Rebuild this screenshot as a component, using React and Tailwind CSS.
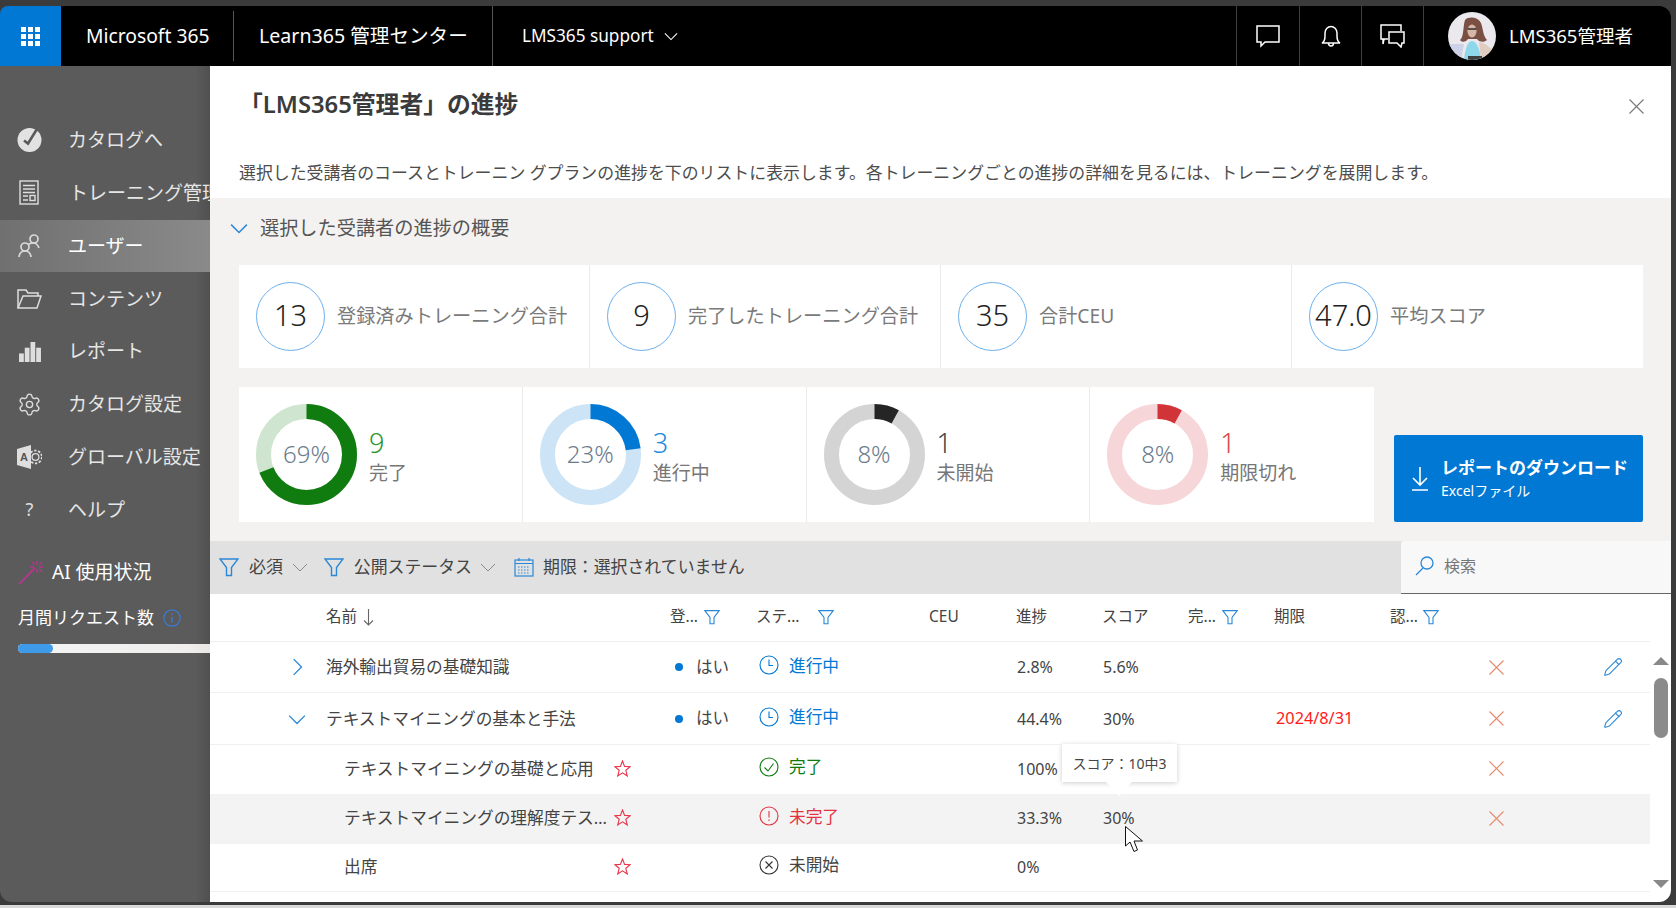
import { Settings, Pencil } from "lucide-react";

const tableCols =
    "grid grid-cols-[116px_344px_87px_173px_86px_86px_86px_86px_116px_99px_114px_47px] items-center";

const navItems = [
    { label: "カタログへ", icon: <CatalogIcon /> },
    { label: "トレーニング管理", icon: <TrainingIcon />, shift: true },
    { label: "ユーザー", icon: <UsersIcon />, active: true },
    { label: "コンテンツ", icon: <FolderIcon /> },
    { label: "レポート", icon: <BarsIcon /> },
    { label: "カタログ設定", icon: <Settings size={29} strokeWidth={1.3} className="text-[#dedede]" /> },
    { label: "グローバル設定", icon: <GlobalIcon /> },
    { label: "ヘルプ", icon: <span className="block w-[25px] text-center text-[18px] text-[#dedede]">?</span> },
];

const stats = [
    { value: "13", label: "登録済みトレーニング合計" },
    { value: "9", label: "完了したトレーニング合計" },
    { value: "35", label: "合計CEU" },
    { value: "47.0", label: "平均スコア" },
];

const donuts = [
    { pct: 69, count: "9", label: "完了", main: "#107c10", track: "#cfe5cf", text: "text-[#2b962b]", r: 43, w: 15 },
    { pct: 23, count: "3", label: "進行中", main: "#0078d4", track: "#cce4f6", text: "text-[#1f8ae0]", r: 43, w: 15 },
    { pct: 8, count: "1", label: "未開始", main: "#252525", track: "#d4d4d4", text: "text-[#444444]", r: 43, w: 15 },
    { pct: 8, count: "1", label: "期限切れ", main: "#d13438", track: "#f6d6d8", text: "text-[#d9474b]", r: 43, w: 15 },
];

const rows = [
    { name: "海外輸出貿易の基礎知識", open: false, reg: true, status: "progress", prog: "2.8%", score: "5.6%", edit: true, h: "h-[51px]" },
    { name: "テキストマイニングの基本と手法", open: true, reg: true, status: "progress", prog: "44.4%", score: "30%", due: "2024/8/31", edit: true, h: "h-[52px]" },
    { name: "テキストマイニングの基礎と応用", child: true, status: "done", prog: "100%", h: "h-[49px]" },
    { name: "テキストマイニングの理解度テスト", child: true, status: "failed", prog: "33.3%", score: "30%", hover: true, h: "h-[50px]" },
    { name: "出席", child: true, status: "none", prog: "0%", noX: true, h: "h-[48px]" },
];

function CatalogIcon() {
    return (
        <svg width="25" height="26" viewBox="0 0 25 26">
            <circle cx="12.5" cy="13" r="12" fill="#e2e2e2" />
            <path d="M7 13.5 L11 16.5 L20 2" fill="none" stroke="#5a5a5a" strokeWidth="2.6" />
        </svg>
    );
}

function TrainingIcon() {
    return (
        <svg width="25" height="26" viewBox="0 0 25 26" fill="none" stroke="#dedede" strokeWidth="1.4">
            <rect x="3" y="1" width="18" height="23" />
            <path d="M6 5.5 H18 M6 9 H18 M6 12.5 H18 M6 16 H11 M6 20 H11" />
            <rect x="13" y="15.5" width="5" height="5" />
        </svg>
    );
}

function UsersIcon() {
    return (
        <svg width="25" height="26" viewBox="0 0 25 26" fill="none" stroke="#d8d8d8" strokeWidth="1.7">
            <circle cx="17" cy="6" r="4" />
            <circle cx="8" cy="14" r="4" />
            <path d="M11 12 C12 10.5 14 10 16 10 C19 10 21 12 22 15" />
            <path d="M2 24 C2.5 20 5 18 8 18 C11 18 13.5 20 14 24" />
        </svg>
    );
}

function FolderIcon() {
    return (
        <svg width="25" height="22" viewBox="0 0 25 22" fill="none" stroke="#dedede" strokeWidth="1.5">
            <path d="M1 20 V2 H9 L11 5 H21 V8" />
            <path d="M1 20 L6 8 H24 L20 20 Z" />
        </svg>
    );
}

function BarsIcon() {
    return (
        <svg width="24" height="20" viewBox="0 0 25 21" fill="#dedede">
            <rect x="1" y="12" width="5" height="9" />
            <rect x="7" y="6" width="5" height="15" />
            <rect x="13" y="0" width="5" height="21" />
            <rect x="19" y="6" width="5" height="15" />
        </svg>
    );
}

function GlobalIcon() {
    return (
        <svg width="25" height="24" viewBox="0 0 25 24">
            <path d="M0 4 L14 0 V24 L0 20 Z" fill="#dedede" />
            <text x="3" y="16" fontSize="11" fontWeight="700" fill="#555555" fontFamily="Liberation Sans">A</text>
            <circle cx="18.5" cy="12" r="3.4" fill="none" stroke="#dedede" strokeWidth="1.3" />
            <circle cx="18.5" cy="12" r="6.4" fill="none" stroke="#dedede" strokeWidth="1.8" strokeDasharray="2.4 1.6" />
        </svg>
    );
}

function Funnel({ size = 20 }) {
    return (
        <svg width={size} height={size} viewBox="0 0 20 20" fill="none" stroke="#2b88d8" strokeWidth="1.4" className="shrink-0">
            <path d="M1 2 H19 L12.5 10.5 V18.5 H7.5 V10.5 Z" />
        </svg>
    );
}

function Chevron({ dir = "down", size = 16, color = "#2b88d8", sw = 1.3 }) {
    const d = dir === "down" ? "M1 5 L8 12 L15 5" : "M5 1 L12 8 L5 15";
    return (
        <svg width={size} height={size} viewBox="0 0 16 16" fill="none" stroke={color} strokeWidth={sw} className="shrink-0">
            <path d={d} />
        </svg>
    );
}

function StatusIcon({ status }) {
    const color = { progress: "#0078d4", done: "#107c10", failed: "#e3323f", none: "#333333" }[status];
    return (
        <svg width="20" height="20" viewBox="0 0 20 20" fill="none" stroke={color} strokeWidth="1.1" className="shrink-0">
            <circle cx="10" cy="10" r="9" />
            {status === "progress" && <path d="M10 4.5 V10.5 H14" />}
            {status === "done" && <path d="M5.5 10.5 L9 14 L14.5 6.5" />}
            {status === "failed" && <path d="M10 5 V11.5 M10 13.5 V15" />}
            {status === "none" && <path d="M6.5 6.5 L13.5 13.5 M13.5 6.5 L6.5 13.5" />}
        </svg>
    );
}

function Star() {
    return (
        <svg width="17" height="17" viewBox="0 0 17 17" fill="none" stroke="#e8344a" strokeWidth="1.1" className="shrink-0">
            <path d="M8.5 1 L10.6 6.4 L16.2 6.7 L11.8 10.3 L13.3 16 L8.5 12.8 L3.7 16 L5.2 10.3 L0.8 6.7 L6.4 6.4 Z" />
        </svg>
    );
}

function Cross({ size = 15, color = "#e58a6a" }) {
    return (
        <svg width={size} height={size} viewBox="0 0 15 15" fill="none" stroke={color} strokeWidth="1.1">
            <path d="M0.5 0.5 L14.5 14.5 M14.5 0.5 L0.5 14.5" />
        </svg>
    );
}

function Avatar() {
    return (
        <svg width="48" height="48" viewBox="0 0 48 48" className="shrink-0 rounded-full">
            <rect width="48" height="48" fill="#ece9ee" />
            <path d="M0 32 H16 L13 48 H0 Z" fill="#cdd2e8" />
            <path d="M17 8 C21 4 30 5 33 11 C35 16 35 24 39 28 C36 31 31 30 29 27 H20 C18 30 14 31 12 28 C16 25 15 13 17 8 Z" fill="#7a5044" />
            <ellipse cx="24" cy="19" rx="4.6" ry="6.5" fill="#d8b6a6" />
            <path d="M19.5 17 H28.5" stroke="#2a2a2a" strokeWidth="1.3" />
            <path d="M16 48 C17 36 20 29 24 29 C28 29 32 36 33 48 Z" fill="#8fd8ec" />
            <path d="M31 30 C38 31 44 36 47 44 V48 H33 Z" fill="#e0cdbf" />
            <path d="M20 44 H34 V48 H20 Z" fill="#3f3f40" />
        </svg>
    );
}

function Donut({ item }) {
    const c = 2 * Math.PI * item.r;
    return (
        <svg width="101" height="101" viewBox="0 0 101 101" className="absolute inset-0 -rotate-90">
            <circle cx="50.5" cy="50.5" r={item.r} fill="none" stroke={item.track} strokeWidth={item.w} />
            <circle
                cx="50.5"
                cy="50.5"
                r={item.r}
                fill="none"
                stroke={item.main}
                strokeWidth={item.w}
                strokeDasharray={`${(c * item.pct) / 100} ${c}`}
            />
        </svg>
    );
}

function Header() {
    return (
        <header className="flex h-[60px] shrink-0 items-center rounded-t-xl bg-black text-white">
            <div className="flex h-full w-[61px] items-center justify-center rounded-tl-lg bg-[#0078d4]">
                <div className="grid grid-cols-3 gap-[2px]">
                    {Array.from({ length: 9 }).map((_, i) => (
                        <span key={i} className="h-[5px] w-[5px] bg-white" />
                    ))}
                </div>
            </div>
            <div className="flex h-[50px] w-[173px] items-center border-r border-[#555555] pl-[25px] text-[19.3px]">
                Microsoft 365
            </div>
            <div className="flex h-full w-[259px] items-center border-r border-[#555555] pl-[25px] text-[19.6px]">
                Learn365 管理センター
            </div>
            <div className="flex items-center gap-[10px] pl-[29px] text-[17.2px]">
                LMS365 support
                <Chevron size={14} color="#ffffff" sw={1.2} />
            </div>
            <div className="ml-auto flex h-full items-center">
                <div className="flex h-full w-[63px] items-center justify-center border-l border-[#3f3f3f]">
                    <svg width="24" height="24" viewBox="0 0 24 24" fill="none" stroke="#ffffff" strokeWidth="1.5">
                        <path d="M1 2 H23 V18 H9 L5 22 V18 H1 Z" />
                    </svg>
                </div>
                <div className="flex h-full w-[62px] items-center justify-center border-l border-[#3f3f3f]">
                    <svg width="22" height="23" viewBox="0 0 22 23" fill="none" stroke="#ffffff" strokeWidth="1.5">
                        <path d="M2 18 C4 17 5 15 5 11 V8 C5 4 8 1.5 11 1.5 C14 1.5 17 4 17 8 V11 C17 15 18 17 20 18 Z" />
                        <path d="M8.5 18 C8.5 22 13.5 22 13.5 18" />
                    </svg>
                </div>
                <div className="flex h-full w-[62px] items-center justify-center border-l border-[#3f3f3f]">
                    <svg width="25" height="24" viewBox="0 0 25 24" fill="none" stroke="#ffffff" strokeWidth="1.5">
                        <path d="M8 15 H4 L3 20 V15 H1 V1 H21 V7" />
                        <path d="M9 8 H24 V19 H22 L21 23 L17 19 H9 Z" />
                    </svg>
                </div>
                <div className="flex h-full w-[248px] items-center gap-[13px] border-l border-[#3f3f3f] pl-[24px] text-[18.5px]">
                    <Avatar />
                    LMS365管理者
                </div>
            </div>
        </header>
    );
}

function Sidebar() {
    return (
        <aside className="w-[210px] shrink-0 overflow-hidden rounded-bl-xl bg-[linear-gradient(90deg,#5b5b5b_93%,#505050)] pt-[48px] text-[#e6e6e6]">
            <nav>
                {navItems.map((item) => (
                    <div
                        key={item.label}
                        className={`flex h-[52.8px] items-center whitespace-nowrap pl-[17px] text-[19px] ${
                            item.active ? "bg-[linear-gradient(90deg,#707070,#8a8a8a)] text-white" : ""
                        }`}
                    >
                        <span className="flex w-[25px] shrink-0 justify-center">{item.icon}</span>
                        <span className={item.shift ? "ml-[27px]" : "ml-[26px]"}>{item.label}</span>
                    </div>
                ))}
            </nav>
            <div className="mt-[22px] flex items-center gap-[9px] pl-[18px] text-[19px] text-white">
                <svg width="25" height="25" viewBox="0 0 25 25" fill="none" stroke="#b5378d" strokeWidth="1.4" className="shrink-0">
                    <path d="M1 24 L17 8" strokeWidth="1.8" />
                    <path d="M19 1 V5 M19 9 V13 M12 7 H16 M21 7 H25 M14 2 L16.5 4.5 M24 2 L21.5 4.5 M21.5 9.5 L24 12" />
                </svg>
                AI 使用状況
            </div>
            <div className="mt-[18px] flex items-center gap-[9px] pl-[18px] text-[17px] text-white">
                月間リクエスト数
                <svg width="18" height="18" viewBox="0 0 18 18" fill="none" stroke="#3a7bd5" strokeWidth="1.2" className="shrink-0">
                    <circle cx="9" cy="9" r="8.2" />
                    <path d="M9 8 V13.5 M9 4.5 V6" strokeWidth="1.5" />
                </svg>
            </div>
            <div className="ml-[18px] mt-[14px] h-[9px] w-[240px] rounded-full bg-[linear-gradient(90deg,#f4f4f4,#f0efee_70%,#d8d6d4)]">
                <div className="h-full w-[35px] rounded-full bg-[#3d9be9]" />
            </div>
        </aside>
    );
}

function Summary() {
    return (
        <section className="h-[343px] shrink-0 bg-[#f3f2f1] pl-[29px] pr-[28px]">
            <div className="flex h-[67px] items-center gap-[12px] pb-[7px] text-[19.2px] text-[#555555]">
                <span className="-ml-[9px]">
                    <Chevron size={18} sw={1.3} />
                </span>
                選択した受講者の進捗の概要
            </div>
            <div className="flex h-[103px] bg-white">
                {stats.map((s, i) => (
                    <div
                        key={s.label}
                        className={`flex w-[351px] items-center gap-[12px] pl-[17px] ${i < 3 ? "border-r border-[#eaeaea]" : ""}`}
                    >
                        <div className="flex h-[69px] w-[69px] shrink-0 items-center justify-center rounded-full border border-[#6cb0ee] pb-[3px] text-[29px] font-light text-[#222222]">
                            {s.value}
                        </div>
                        <span className="text-[19.2px] text-[#7a7a7a]">{s.label}</span>
                    </div>
                ))}
            </div>
            <div className="mt-[19px] flex h-[135px] items-end justify-between">
                <div className="flex h-full bg-white">
                    {donuts.map((d, i) => (
                        <div
                            key={d.label}
                            className={`flex w-[283.75px] items-center gap-[12px] pl-[17px] ${i < 3 ? "border-r border-[#eaeaea]" : ""}`}
                        >
                            <div className="relative flex h-[101px] w-[101px] shrink-0 items-center justify-center">
                                <Donut item={d} />
                                <span className="pb-[2px] text-[24px] font-light text-[#6b7b8c]">{d.pct}%</span>
                            </div>
                            <div className="flex flex-col pt-[3px]">
                                <span className={`text-[27px] font-light leading-[34px] ${d.text}`}>{d.count}</span>
                                <span className="text-[19px] leading-[27px] text-[#777777]">{d.label}</span>
                            </div>
                        </div>
                    ))}
                </div>
                <div className="flex h-[87px] w-[249px] items-center gap-[12px] rounded-[2px] bg-[#0078d4] pl-[17px] text-white">
                    <svg width="18" height="25" viewBox="0 0 18 25" fill="none" stroke="#ffffff" strokeWidth="1.6" className="shrink-0">
                        <path d="M9 1 V19 M2 12 L9 19 L16 12 M1 24 H17" />
                    </svg>
                    <div className="flex flex-col">
                        <span className="whitespace-nowrap text-[17px] font-bold leading-[24px]">レポートのダウンロード</span>
                        <span className="text-[14px] leading-[22px]">Excelファイル</span>
                    </div>
                </div>
            </div>
        </section>
    );
}

function FilterBar() {
    return (
        <div className="flex h-[53px] shrink-0 items-center bg-[#e1e1e1] text-[16.9px] text-[#444444]">
            <div className="flex flex-1 items-center pb-px pl-[9px]">
                <Funnel />
                <span className="ml-[10px]">必須</span>
                <span className="ml-[9px]"><Chevron size={16} color="#8a8a8a" sw={1} /></span>
                <span className="ml-[16px]"><Funnel /></span>
                <span className="ml-[10px]">公開ステータス</span>
                <span className="ml-[8px]"><Chevron size={16} color="#8a8a8a" sw={1} /></span>
                <svg width="20" height="20" viewBox="0 0 20 20" fill="none" stroke="#2b88d8" strokeWidth="1.2" className="ml-[18px] shrink-0">
                    <rect x="1" y="3" width="18" height="16" />
                    <path d="M1 6.5 H19 M5 1 V4 M15 1 V4" />
                    <path d="M4 10 H16 M4 13 H16 M4 16 H16" strokeDasharray="1.5 1.5" />
                </svg>
                <span className="ml-[9px]">期限：選択されていません</span>
            </div>
            <div className="flex h-full w-[270px] items-center gap-[10px] rounded-tl-[3px] border-b border-[#666666] bg-[#f8f8f8] pb-[2px] pl-[14px] text-[16px] text-[#777777]">
                <svg width="19" height="20" viewBox="0 0 19 20" fill="none" stroke="#2b88d8" strokeWidth="1.3" className="shrink-0">
                    <circle cx="12" cy="7" r="6" />
                    <path d="M8 12 L1 19" />
                </svg>
                検索
            </div>
        </div>
    );
}

function TableHead() {
    return (
        <div className={`${tableCols} h-[48px] shrink-0 border-b border-[#eeeeee] pb-px text-[15.5px] text-[#444444]`}>
            <span />
            <span className="flex items-center gap-[6px]">
                名前
                <svg width="11" height="18" viewBox="0 0 11 18" fill="none" stroke="#666666" strokeWidth="1.1">
                    <path d="M5.5 1 V17 M1 12.5 L5.5 17 L10 12.5" />
                </svg>
            </span>
            <span className="flex items-center gap-[6px]">登... <Funnel size={16} /></span>
            <span className="-ml-px flex items-center gap-[19px]">ステ... <Funnel size={16} /></span>
            <span className="-ml-px">CEU</span>
            <span>進捗</span>
            <span>スコア</span>
            <span className="flex items-center gap-[6px]">完... <Funnel size={16} /></span>
            <span>期限</span>
            <span className="flex items-center gap-[5px]">認... <Funnel size={16} /></span>
            <span />
            <span />
        </div>
    );
}

function Row({ row }) {
    const statusText = {
        progress: ["進行中", "text-[#0078d4]"],
        done: ["完了", "text-[#107c10]"],
        failed: ["未完了", "text-[#e3323f]"],
        none: ["未開始", "text-[#444444]"],
    }[row.status];

    return (
        <div className={`${tableCols} ${row.h} text-[16.7px] text-[#444444] ${row.hover ? "bg-[#f3f3f3]" : ""} ${row.child ? "pb-[2px]" : "border-b border-[#f0f0f0]"} ${row.noX ? "border-b border-[#f0f0f0]" : ""}`}>
            <span className="flex justify-end pr-[20px]">
                {!row.child && <Chevron dir={row.open ? "down" : "right"} size={18} sw={1.2} />}
            </span>
            {row.child ? (
                <span className="flex items-center pl-[18px]">
                    <span className="w-[265px] truncate">{row.name}</span>
                    <span className="ml-[5px]"><Star /></span>
                </span>
            ) : (
                <span>{row.name}</span>
            )}
            <span className="flex items-center gap-[13px] pl-[5px] text-[16.5px]">
                {row.reg && (
                    <>
                        <span className="h-[8px] w-[8px] rounded-full bg-[#0078d4]" />
                        はい
                    </>
                )}
            </span>
            <span className={`flex items-center gap-[10px] pb-[3px] pl-[2px] ${statusText[1]}`}>
                <StatusIcon status={row.status} />
                {statusText[0]}
            </span>
            <span />
            <span className="pl-[1px] text-[16px]">{row.prog}</span>
            <span className="pl-[1px] text-[16px]">{row.score}</span>
            <span />
            <span className="pl-[2px] text-[16.3px] text-[#ff1a1a]">{row.due}</span>
            <span />
            <span>{!row.noX && <Cross />}</span>
            <span>
                {row.edit && <Pencil size={20} strokeWidth={1.3} className="text-[#2b88d8]" />}
            </span>
        </div>
    );
}

function Scrollbar() {
    return (
        <div className="flex w-[21px] shrink-0 flex-col items-center pt-[63px]">
            <div className="h-0 w-0 border-x-[8px] border-b-[8px] border-x-transparent border-b-[#888888]" />
            <div className="mt-[13px] h-[60px] w-[14px] rounded-full bg-[#8b8b8b]" />
            <div className="mt-[142px] h-0 w-0 border-x-[8px] border-t-[8px] border-x-transparent border-t-[#888888]" />
        </div>
    );
}

function Panel() {
    return (
        <main className="flex min-w-0 flex-1 flex-col overflow-hidden rounded-br-xl bg-white">
            <div className="relative h-[132px] shrink-0 pl-[29px]">
                <h1 className="pt-[21px] text-[23.8px] font-semibold leading-[34px] text-[#3b3b3b]">「LMS365管理者」の進捗</h1>
                <p className="mt-[40px] whitespace-nowrap text-[16.9px] leading-[24px] text-[#4d4d4d]">
                    選択した受講者のコースとトレーニン グプランの進捗を下のリストに表示します。各トレーニングごとの進捗の詳細を見るには、トレーニングを展開します。
                </p>
                <span className="absolute right-[27px] top-[33px]">
                    <Cross size={15} color="#777777" />
                </span>
            </div>
            <Summary />
            <FilterBar />
            <div className="flex flex-1">
                <div className="w-[1440px] shrink-0">
                    <TableHead />
                    {rows.map((r) => (
                        <Row key={r.name} row={r} />
                    ))}
                </div>
                <Scrollbar />
            </div>
        </main>
    );
}

export default function App() {
    return (
        <div className="relative flex h-[908px] w-[1676px] flex-col overflow-hidden bg-[#3b3b3b] pt-[6px] font-['Noto_Sans','Noto_Sans_CJK_JP',sans-serif]">
            <div className="flex h-[896px] flex-col pr-[5px]">
                <Header />
                <div className="flex min-h-0 flex-1">
                    <Sidebar />
                    <Panel />
                </div>
            </div>
            <div className="mt-[3px] h-[3px] bg-[#d9d9d9]" />

            {/* tooltip and mouse pointer over the table */}
            <div className="absolute left-[1062px] top-[744px] flex h-[38px] w-[115px] items-center justify-center bg-white text-[14px] text-[#444444] shadow-[0_1px_5px_rgba(0,0,0,0.2)]">
                スコア：10中3
                <span className="absolute left-[44px] top-full h-0 w-0 border-x-[13px] border-t-[14px] border-x-transparent border-t-white" />
            </div>
            <svg width="19" height="27" viewBox="0 0 19 27" className="absolute left-[1125px] top-[826px]">
                <path d="M0.5 0.5 V20 L5 16 L9 25.5 L12.5 24 L9 15 H17.5 Z" fill="#ffffff" stroke="#111111" strokeWidth="1" />
            </svg>
        </div>
    );
}
